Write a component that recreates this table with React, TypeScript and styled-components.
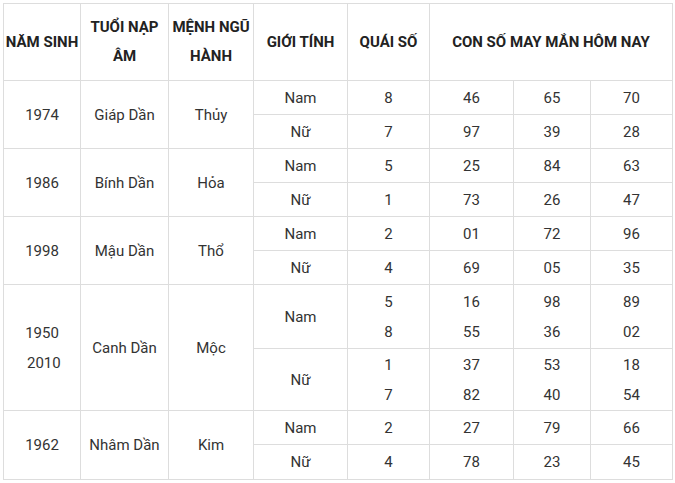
import React from 'react'
import styled, { createGlobalStyle } from 'styled-components'

const GlobalStyle = createGlobalStyle`
  html, body {
    margin: 0;
    padding: 0;
    background: #fff;
  }
  body {
    font-family: Roboto, "Liberation Sans", Arial, sans-serif;
    color: #333;
  }
`

const PageStyled = styled.div`
  padding: 3px 0 0 3px;
`

const TableStyled = styled.table`
  width: 669px;
  border-collapse: collapse;
  table-layout: fixed;
  font-size: 15px;
`

const Th = styled.th<{ nowrap?: boolean }>`
  border: 1px solid #ddd;
  padding: 0;
  font-weight: 700;
  color: #222;
  line-height: 29px;
  text-align: center;
  vertical-align: middle;
  white-space: ${(p) => (p.nowrap ? 'nowrap' : 'normal')};
`

const Td = styled.td`
  border: 1px solid #ddd;
  padding: 0 3px;
  font-weight: 400;
  line-height: 20px;
  text-align: center;
  vertical-align: middle;
`

const Tr = styled.tr<{ h: number }>`
  height: ${(p) => p.h}px;
`

const Lines = styled.div`
  line-height: 30px;
`

type GenderRow = {
  gender: string
  quai: string[]
  nums: string[][]
  h: number
}

type Group = {
  years: string[]
  tuoi: string
  menh: string
  rows: GenderRow[]
}

const groups: Group[] = [
  {
    years: ['1974'], tuoi: 'Giáp Dần', menh: 'Thủy',
    rows: [
      { gender: 'Nam', quai: ['8'], nums: [['46'], ['65'], ['70']], h: 34 },
      { gender: 'Nữ', quai: ['7'], nums: [['97'], ['39'], ['28']], h: 34 },
    ],
  },
  {
    years: ['1986'], tuoi: 'Bính Dần', menh: 'Hỏa',
    rows: [
      { gender: 'Nam', quai: ['5'], nums: [['25'], ['84'], ['63']], h: 34 },
      { gender: 'Nữ', quai: ['1'], nums: [['73'], ['26'], ['47']], h: 34 },
    ],
  },
  {
    years: ['1998'], tuoi: 'Mậu Dần', menh: 'Thổ',
    rows: [
      { gender: 'Nam', quai: ['2'], nums: [['01'], ['72'], ['96']], h: 34 },
      { gender: 'Nữ', quai: ['4'], nums: [['69'], ['05'], ['35']], h: 34 },
    ],
  },
  {
    years: ['1950', '\u00a02010'], tuoi: 'Canh Dần', menh: 'Mộc',
    rows: [
      { gender: 'Nam', quai: ['5', '8'], nums: [['16', '55'], ['98', '36'], ['89', '02']], h: 64 },
      { gender: 'Nữ', quai: ['1', '7'], nums: [['37', '82'], ['53', '40'], ['18', '54']], h: 62 },
    ],
  },
  {
    years: ['1962'], tuoi: 'Nhâm Dần', menh: 'Kim',
    rows: [
      { gender: 'Nam', quai: ['2'], nums: [['27'], ['79'], ['66']], h: 34 },
      { gender: 'Nữ', quai: ['4'], nums: [['78'], ['23'], ['45']], h: 35 },
    ],
  },
]

const Multi: React.FC<{ values: string[] }> = ({ values }) =>
  values.length > 1 ? (
    <Lines>
      {values.map((v, i) => <div key={i}>{v}</div>)}
    </Lines>
  ) : (
    <>{values[0]}</>
  )

const App: React.FC = () => {
  return (
    <PageStyled>
      <GlobalStyle />
      <TableStyled>
        <colgroup>
          <col style={{ width: 77 }} />
          <col style={{ width: 88 }} />
          <col style={{ width: 85 }} />
          <col style={{ width: 94 }} />
          <col style={{ width: 82 }} />
          <col style={{ width: 84 }} />
          <col style={{ width: 77 }} />
          <col style={{ width: 82 }} />
        </colgroup>
        <tbody>
          <Tr h={77}>
            <Th nowrap>NĂM SINH</Th>
            <Th>TUỔI NẠP ÂM</Th>
            <Th>MỆNH NGŨ HÀNH</Th>
            <Th>GIỚI TÍNH</Th>
            <Th>QUÁI SỐ</Th>
            <Th colSpan={3}>CON SỐ MAY MẮN HÔM NAY</Th>
          </Tr>
          {groups.map((g) =>
            g.rows.map((r, i) => (
              <Tr h={r.h} key={g.tuoi + i}>
                {i === 0 && (
                  <>
                    <Td rowSpan={2}><Multi values={g.years} /></Td>
                    <Td rowSpan={2}>{g.tuoi}</Td>
                    <Td rowSpan={2}>{g.menh}</Td>
                  </>
                )}
                <Td>{r.gender}</Td>
                <Td><Multi values={r.quai} /></Td>
                {r.nums.map((n, j) => (
                  <Td key={j}><Multi values={n} /></Td>
                ))}
              </Tr>
            ))
          )}
        </tbody>
      </TableStyled>
    </PageStyled>
  )
}

export default App
